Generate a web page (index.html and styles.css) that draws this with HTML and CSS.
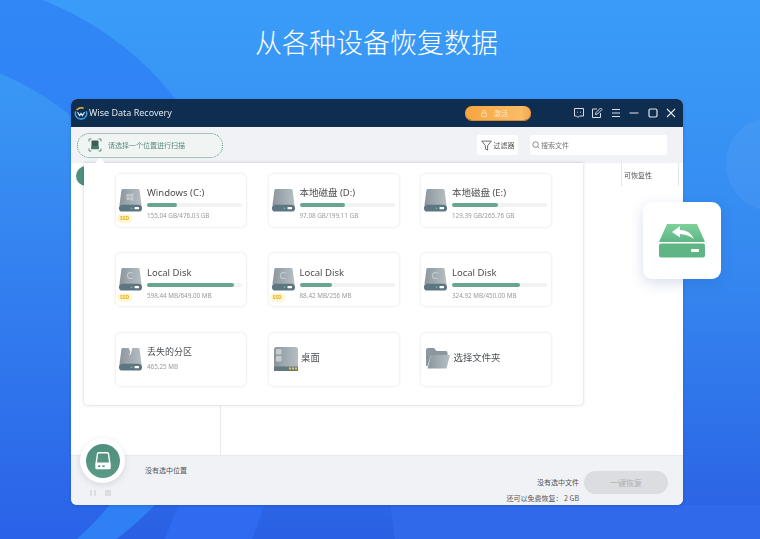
FILE: index.html
```html
<!DOCTYPE html>
<html lang="zh">
<head>
<meta charset="utf-8">
<title>Wise Data Recovery</title>
<link rel="stylesheet" href="styles.css">
</head>
<body>
<svg class="backdrop" viewBox="0 0 760 539" aria-hidden="true">
  <defs>
    <linearGradient id="driveBody" x1="0" y1="0" x2="1" y2="0">
      <stop offset="0" stop-color="#8b979d"/>
      <stop offset="1" stop-color="#b6bec3"/>
    </linearGradient>
    <linearGradient id="greenTop" x1="0" y1="0" x2="0" y2="1">
      <stop offset="0" stop-color="#7fd09a"/>
      <stop offset="1" stop-color="#5eb585"/>
    </linearGradient>
    <linearGradient id="leftGlow" gradientUnits="userSpaceOnUse" x1="0" y1="70" x2="0" y2="539">
      <stop offset="0" stop-color="#3a98f5"/>
      <stop offset="1" stop-color="#2a62e8"/>
    </linearGradient>
    <linearGradient id="outerArc" gradientUnits="userSpaceOnUse" x1="0" y1="0" x2="0" y2="200">
      <stop offset="0" stop-color="#3187f6"/>
      <stop offset="1" stop-color="#2f80f5"/>
    </linearGradient>
    <symbol id="drive" viewBox="0 0 26 26">
      <path d="M3.500 2.500Q3.600 1 5 1H21Q22.400 1 22.500 2.500L24.500 18H1.500Z" fill="url(#driveBody)"/>
      <rect x="1" y="17.500" width="24" height="7" rx="3.500" fill="#5d7682"/>
      <circle cx="14" cy="21" r=".8" fill="#63d0a8"/>
      <rect x="17" y="19.800" width="5" height="2.400" rx="1.200" fill="#fff"/>
    </symbol>
  </defs>
  <circle cx="-70" cy="290" r="311" fill="url(#outerArc)"/>
  <circle cx="-105" cy="330" r="277" fill="url(#leftGlow)"/>
  <circle cx="773" cy="164" r="47" fill="#fff" fill-opacity=".05"/>
  <path d="M178 505H265L252 539H165Z" fill="#2f6bf0"/>
  <path d="M390 505H760V539H395Z" fill="#3069ea"/>
</svg>

<h1 class="headline">从各种设备恢复数据</h1>

<main class="window">
  <header class="titlebar">
    <svg class="logo" viewBox="0 0 16 16"><path d="M2 6a6.500 6.500 0 1 0 12 0" fill="none" stroke="#3aa0e8" stroke-width="1.800"/><path d="M4 7l2.500 4L8 8.500 9.500 11 12 7" fill="none" stroke="#cfe8fa" stroke-width="1.300"/><path d="M3 4.500Q6.500 1 11 2.500" fill="none" stroke="#f2b33d" stroke-width="1.800"/></svg>
    <span class="app-name">Wise Data Recovery</span>
    <button class="activate">
      <svg class="lock" viewBox="0 0 10 10"><path d="M3 4.500V3a2 2 0 0 1 4 0v1.500" fill="none" stroke="#ffe3c0" stroke-width="1"/><rect x="2" y="4.500" width="6" height="4.500" rx=".6" fill="none" stroke="#ffe3c0" stroke-width="1"/></svg>
      <span>激活</span>
    </button>
    <div class="win-controls">
      <svg viewBox="0 0 12 12"><path d="M1.500 1.500H10.500V9H6.500L5 10.500 3.500 9H1.500Z" fill="none" stroke="#d6dee6"/><path d="M4 5.200h.8M7 5.200h.8" stroke="#d6dee6"/></svg>
      <svg viewBox="0 0 12 12"><path d="M9.500 6V10.500H1.500V2H6" fill="none" stroke="#d6dee6"/><path d="M4.500 7.500L5 5.500 9.500 1 11 2.500 6.500 7Z" fill="none" stroke="#d6dee6"/></svg>
      <svg viewBox="0 0 12 12"><path d="M2 2.500H10M2 6H10M2 9.500H10" stroke="#d6dee6" stroke-width="1.200"/></svg>
      <svg viewBox="0 0 12 12"><path d="M1.500 6H10.500" stroke="#e3e8ee" stroke-width="1.200"/></svg>
      <svg viewBox="0 0 12 12"><rect x="2" y="2" width="8" height="8" rx="1.500" fill="none" stroke="#e3e8ee" stroke-width="1.200"/></svg>
      <svg viewBox="0 0 12 12"><path d="M2 2L10 10M10 2L2 10" stroke="#e3e8ee" stroke-width="1.100"/></svg>
    </div>
  </header>

  <div class="toolbar">
    <div class="scan-pick">
      <svg class="scan-icon" viewBox="0 0 14 14"><path d="M1 3.500V1H3.500M10.500 1H13V3.500M13 10.500V13H10.500M3.500 13H1V10.500" fill="none" stroke="#5f9180" stroke-width="1"/><path d="M3.500 3.300Q3.500 2.500 4.300 2.500H9.700Q10.500 2.500 10.500 3.300V8H3.500Z" fill="#3f5f55"/><rect x="3" y="8" width="8" height="3.200" rx="1" fill="#3f7d68"/></svg>
      <span>请选择一个位置进行扫描</span>
    </div>
    <div class="tool-right">
      <div class="filter">
        <svg viewBox="0 0 12 12"><path d="M.8 1.200H11.200L7.200 6.200V11L4.800 9.800V6.200Z" fill="none" stroke="#4a5258" stroke-width=".9"/></svg>
        <span>过滤器</span>
      </div>
      <div class="search">
        <svg viewBox="0 0 10 10"><circle cx="4.500" cy="4.500" r="3.500" fill="none" stroke="#5c6469" stroke-width=".9"/><path d="M7 7L9 9" stroke="#5c6469" stroke-width=".9"/></svg>
        <span>搜索文件</span>
      </div>
    </div>
  </div>

  <section class="content">
    <div class="side-tab"></div>
    <div class="col-line"></div>
    <div class="col-head"><span>可恢复性</span></div>

    <div class="popup">
      <article class="card">
        <div class="drive-wrap">
          <svg class="drive"><use href="#drive"/></svg>
          <svg class="win-mark" viewBox="0 0 8 8"><path d="M.5 1.200L3.600.8V3.800H.5ZM4.200.7L7.500.2V3.800H4.200ZM.5 4.300H3.600V7.200L.5 6.800ZM4.200 4.300H7.500V7.800L4.200 7.300Z" fill="#c3cacd"/></svg>
          <span class="ssd">SSD</span>
        </div>
        <div class="info">
          <div class="name">Windows (C:)</div>
          <div class="bar"><div class="fill" style="width:32%"></div></div>
          <div class="size">155.04 GB/476.03 GB</div>
        </div>
      </article>
      <article class="card">
        <div class="drive-wrap"><svg class="drive"><use href="#drive"/></svg></div>
        <div class="info">
          <div class="name">本地磁盘 (D:)</div>
          <div class="bar"><div class="fill" style="width:48%"></div></div>
          <div class="size">97.08 GB/199.11 GB</div>
        </div>
      </article>
      <article class="card">
        <div class="drive-wrap"><svg class="drive"><use href="#drive"/></svg></div>
        <div class="info">
          <div class="name">本地磁盘 (E:)</div>
          <div class="bar"><div class="fill" style="width:48%"></div></div>
          <div class="size">129.39 GB/265.76 GB</div>
        </div>
      </article>

      <article class="card">
        <div class="drive-wrap">
          <svg class="drive"><use href="#drive"/></svg>
          <span class="swirl"></span>
          <span class="ssd">SSD</span>
        </div>
        <div class="info">
          <div class="name">Local Disk</div>
          <div class="bar"><div class="fill" style="width:92%"></div></div>
          <div class="size">598.44 MB/649.00 MB</div>
        </div>
      </article>
      <article class="card">
        <div class="drive-wrap">
          <svg class="drive"><use href="#drive"/></svg>
          <span class="swirl"></span>
          <span class="ssd">SSD</span>
        </div>
        <div class="info">
          <div class="name">Local Disk</div>
          <div class="bar"><div class="fill" style="width:34%"></div></div>
          <div class="size">88.42 MB/256 MB</div>
        </div>
      </article>
      <article class="card">
        <div class="drive-wrap">
          <svg class="drive"><use href="#drive"/></svg>
          <span class="swirl"></span>
        </div>
        <div class="info">
          <div class="name">Local Disk</div>
          <div class="bar"><div class="fill" style="width:72%"></div></div>
          <div class="size">324.92 MB/450.00 MB</div>
        </div>
      </article>

      <article class="card">
        <div class="drive-wrap">
          <svg class="drive" viewBox="0 0 26 26"><path d="M3.500 2.500Q3.600 1 5 1H11L13 5 11.500 9 13.500 7 15 1H21Q22.400 1 22.500 2.500L24.500 18H1.500Z" fill="url(#driveBody)"/><rect x="1" y="17.500" width="24" height="7" rx="3.500" fill="#5d7682"/><circle cx="14" cy="21" r=".8" fill="#63d0a8"/><rect x="17" y="19.800" width="5" height="2.400" rx="1.200" fill="#fff"/></svg>
        </div>
        <div class="info info-lost">
          <div class="name name-lost">丢失的分区</div>
          <div class="size">465.25 MB</div>
        </div>
      </article>
      <article class="card card-simple">
        <svg class="desk" viewBox="0 0 24 24"><rect width="24" height="24" rx="2.500" fill="url(#driveBody)"/><rect y="19.500" width="24" height="4.500" fill="#66787f"/><rect x="2" y="2" width="5.500" height="5.500" rx="1" fill="#c6cdd1"/><rect x="2" y="9" width="5.500" height="5.500" rx="1" fill="#c6cdd1"/><rect x="15" y="20.500" width="2" height="2" fill="#f2c94c"/><rect x="18" y="20.500" width="2" height="2" fill="#f2c94c"/><rect x="21" y="20.500" width="2" height="2" fill="#f2c94c"/></svg>
        <span class="simple-label">桌面</span>
      </article>
      <article class="card card-simple">
        <svg class="folder" viewBox="0 0 24 22"><path d="M0 2Q0 0 2 0H8L10.500 3H20Q21.500 3 21.500 4.500V7H5L1.500 18H0Z" fill="#8b979d"/><path d="M5 7H24L20.500 20.500H1.500Z" fill="url(#driveBody)"/></svg>
        <span class="simple-label">选择文件夹</span>
      </article>
    </div>
  </section>

  <footer class="bottom">
    <div class="drive-btn-col">
      <div class="drive-btn">
        <div class="drive-btn-inner">
          <svg viewBox="0 0 20 20"><path d="M5 3.500Q5.100 2.500 6 2.500H14Q14.900 2.500 15 3.500L16.200 12H3.800Z" fill="none" stroke="#fff" stroke-width="1.300"/><rect x="3" y="12" width="14" height="5.500" rx="1.200" fill="#fff"/><rect x="5.500" y="14" width="2" height="1.500" fill="#4f8f7d"/><rect x="9.500" y="14" width="2" height="1.500" fill="#4f8f7d"/></svg>
        </div>
      </div>
      <div class="playback"><i class="pause"></i><i class="stop"></i></div>
    </div>
    <div class="no-loc">没有选中位置</div>
    <div class="status">
      <div class="status-lines">
        <div>没有选中文件</div>
        <div>还可以免费恢复： 2 GB</div>
      </div>
      <button class="recover">一键恢复</button>
    </div>
  </footer>
</main>

<aside class="float-badge">
  <svg viewBox="0 0 46 34"><path d="M8 0H38L46 18H0Z" fill="url(#greenTop)"/><rect y="19.500" width="46" height="14" rx="2" fill="#5fb585"/><rect x="32" y="25" width="8" height="3" rx="1" fill="#fff"/><path d="M13 8L21 2V6Q31 6 35 15Q29 10.500 21 10V13.500Z" fill="#fff"/></svg>
</aside>
</body>
</html>
```

FILE: styles.css
```css
* { box-sizing: border-box; }
html, body { margin: 0; padding: 0; }
body {
  position: relative;
  width: 760px;
  height: 539px;
  overflow: hidden;
  font-family: "Noto Sans", "Noto Sans CJK SC", sans-serif;
  background: linear-gradient(180deg, #3a9cf8 0%, #3588f0 50%, #2a60e4 100%);
  color: #444;
}
.backdrop { position: absolute; left: 0; top: 0; width: 760px; height: 539px; display: block; }

.headline {
  position: relative;
  margin: 0 0 0 255px;
  padding-top: 23px;
  height: 99px;
  font-family: "Noto Sans CJK SC", sans-serif;
  font-size: 27px;
  line-height: 38px;
  font-weight: 300;
  color: #fff;
  white-space: nowrap;
}

.window {
  position: relative;
  width: 612px;
  height: 406px;
  margin-left: 71px;
  border-radius: 6px;
  overflow: hidden;
  display: flex;
  flex-direction: column;
  background: #f1f2f6;
  filter: blur(.4px);
  box-shadow: 0 1px 3px rgba(20,50,120,.25);
}

.titlebar {
  flex: 0 0 28px;
  display: flex;
  align-items: center;
  padding: 0 6px 0 2px;
  background: #0f2d4e;
}
.logo { width: 14px; height: 14px; margin-left: 1px; }
.app-name { margin: -2px 0 0 1px; font-size: 9px; color: #dfe6ec; white-space: nowrap; }
.activate {
  margin-left: auto;
  width: 66px;
  height: 14px;
  padding: 0 7px 0 0;
  border: 0;
  border-radius: 7px;
  display: flex;
  align-items: center;
  justify-content: center;
  gap: 6px;
  background: linear-gradient(90deg, #f7a53e, #f9bc66 85%, #f5a648);
  box-shadow: 0 1px 0 #d98a30;
  color: #ffe6c8;
  font: 7px "Noto Sans CJK SC", sans-serif;
}
.lock { width: 8px; height: 9px; }
.win-controls { display: flex; margin-left: 42px; gap: 6.500px; }
.win-controls svg { width: 12px; height: 12px; }

.toolbar {
  flex: 0 0 36px;
  display: flex;
  align-items: center;
  justify-content: space-between;
  padding: 0 16px 0 6px;
  background: #f1f2f6;
}
.scan-pick {
  width: 146px;
  height: 25px;
  display: flex;
  align-items: center;
  gap: 6px;
  padding-left: 10px;
  border: 1.500px dotted #5f9180;
  border-radius: 13px;
  background: #f0f4f3;
  font: 7px "Noto Sans CJK SC", sans-serif;
  color: #5b8a7a;
}
.scan-icon { width: 14px; height: 14px; }
.tool-right { display: flex; align-items: center; gap: 12px; }
.filter {
  width: 41px;
  height: 20px;
  display: flex;
  align-items: center;
  justify-content: center;
  gap: 2px;
  background: #fff;
  border-radius: 2px;
  font: 7px "Noto Sans CJK SC", sans-serif;
  color: #555;
}
.filter svg { width: 11px; height: 11px; }
.search {
  width: 137px;
  height: 20px;
  display: flex;
  align-items: center;
  gap: 1px;
  padding-left: 2px;
  background: #fff;
  border-radius: 2px;
  font: 7px "Noto Sans CJK SC", sans-serif;
  color: #777;
}
.search svg { width: 8px; height: 8px; }

.content {
  position: relative;
  flex: 1;
  min-height: 0;
  background: #fff;
}
.side-tab {
  position: absolute;
  left: 5px; top: 3px;
  width: 20px; height: 20px;
  border-radius: 50%;
  background: #4f8f7d;
}
.col-line {
  position: absolute;
  left: 149px; top: 240px; bottom: 0;
  width: 1px;
  background: #e8e9ee;
}
.col-head {
  position: absolute;
  left: 550px; top: 0;
  width: 58px; height: 23px;
  border-left: 1px solid #e6e7ec;
  border-right: 1px solid #e6e7ec;
  padding: 6px 0 0 2px;
  font: 7px/12px "Noto Sans CJK SC", sans-serif;
  color: #555;
}

.popup {
  position: absolute;
  left: 13px; top: 0;
  width: 499px; height: 242px;
  padding: 10.500px 0 0 32px;
  display: grid;
  grid-template-columns: repeat(3, 130px);
  grid-auto-rows: 53px;
  column-gap: 22.500px;
  row-gap: 26.500px;
  background: #fff;
  border-radius: 0 0 4px 4px;
  box-shadow: 0 0 3px rgba(60,70,90,.3);
}
.popup::before {
  content: "";
  position: absolute;
  left: 11px; top: -5px;
  border-left: 5px solid transparent;
  border-right: 5px solid transparent;
  border-bottom: 5px solid #fff;
}
.card {
  display: flex;
  align-items: center;
  padding: 0 4px 0 2px;
  background: #fff;
  border-radius: 5px;
  box-shadow: 0 0 3px rgba(70,80,100,.18);
}
.drive-wrap { position: relative; flex: 0 0 25px; height: 26px; margin-top: 1px; }
.drive { width: 25px; height: 25px; display: block; }
.win-mark { position: absolute; left: 8px; top: 5px; width: 8px; height: 8px; }
.swirl {
  position: absolute;
  left: 9px; top: 5px;
  width: 7px; height: 7px;
  border-radius: 50%;
  border: 1.500px solid #c6ced2;
  border-right-color: transparent;
}
.ssd {
  position: absolute;
  left: -1px; top: 26px;
  width: 15px; height: 9px;
  border-radius: 4.500px;
  background: #fff6d6;
  color: #e2b020;
  font: 700 5px/9px "Noto Sans", sans-serif;
  text-align: center;
}
.info { margin-left: 4px; flex: 1; min-width: 0; padding-top: 7px; }
.name { font-size: 9.500px; line-height: 14px; color: #4b4f52; white-space: nowrap; }
.bar { height: 4px; margin-top: 3px; border-radius: 2px; background: #f1f2f4; }
.fill { height: 100%; border-radius: 2px; background: #67a592; }
.size { margin-top: 4px; font-size: 6.300px; line-height: 10px; color: #96999d; white-space: nowrap; }
.info-lost { padding-top: 0; margin-top: -2px; }
.info-lost .size { margin-top: 3px; }
.name-lost { font-size: 9px; }
.card-simple { padding-left: 5px; }
.desk { width: 24px; height: 24px; flex: none; }
.folder { width: 24px; height: 22px; flex: none; }
.simple-label { margin-left: 3.500px; margin-top: -5px; font: 9.400px "Noto Sans CJK SC", sans-serif; color: #4b4f52; }

.bottom {
  position: relative;
  flex: 0 0 50px;
  min-height: 0;
  display: flex;
  background: #f1f2f6;
  border-top: 1px solid #e8e9ee;
}
.drive-btn-col { position: absolute; left: 9px; top: -18px; }
.drive-btn {
  width: 45px; height: 45px;
  padding: 5.500px;
  border-radius: 50%;
  background: #fff;
  box-shadow: 0 2px 6px rgba(60,70,90,.15);
}
.drive-btn-inner {
  width: 34px; height: 34px;
  display: flex;
  align-items: center;
  justify-content: center;
  border-radius: 50%;
  background: linear-gradient(180deg, #4f8f7d, #5a9a86);
}
.drive-btn-inner svg { width: 22px; height: 22px; }
.playback { display: flex; gap: 9px; margin: 7px 0 0 10px; }
.pause { width: 6px; height: 6px; border-left: 2px solid #dcdde1; border-right: 2px solid #dcdde1; }
.stop { width: 6px; height: 6px; background: #dcdde1; }
.no-loc { margin: 8px 0 0 74px; font: 7px/12px "Noto Sans CJK SC", sans-serif; color: #555; }
.status {
  margin: 15px 15px 0 auto;
  display: flex;
  align-items: flex-start;
  gap: 5px;
}
.status-lines { text-align: right; font: 7px/16px "Noto Sans CJK SC", sans-serif; color: #555; padding-top: 3px; }
.recover {
  width: 84px;
  height: 23px;
  padding: 0;
  border: 0;
  border-radius: 11.500px;
  background: #dcdde1;
  color: #aeb0b4;
  font: 8px "Noto Sans CJK SC", sans-serif;
}

.float-badge {
  position: absolute;
  left: 643px; top: 202px;
  width: 78px; height: 77px;
  display: flex;
  align-items: center;
  justify-content: center;
  background: #fff;
  border-radius: 9px;
  filter: blur(.3px);
  box-shadow: 0 4px 14px rgba(30,70,150,.18);
}
.float-badge svg { width: 46px; height: 34px; }
```
